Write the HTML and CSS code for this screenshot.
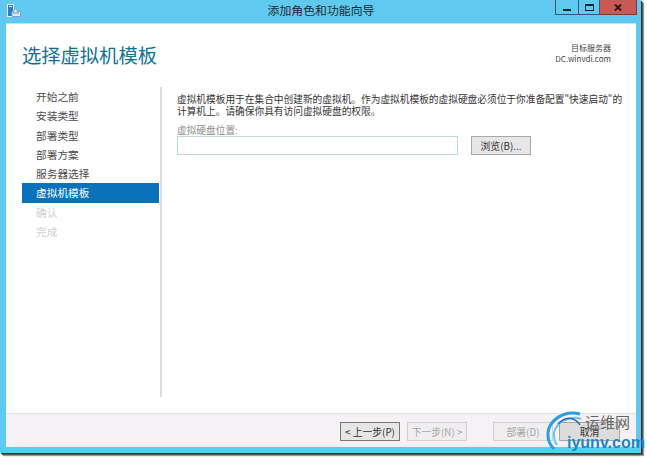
FILE: index.html
```html
<!DOCTYPE html>
<html lang="zh">
<head>
<meta charset="utf-8">
<title>添加角色和功能向导</title>
<link rel="stylesheet" href="styles.css">
</head>
<body>
<div class="window">
  <div class="titlebar">
    <svg class="app-icon" width="14" height="13" viewBox="0 0 14 13">
      <rect x="0.5" y="0.5" width="6" height="12" fill="#2a7fc4" stroke="#e8f4fb"/>
      <rect x="2" y="2" width="3" height="1" fill="#e8f4fb"/>
      <path d="M5 12.5V7.5h2V5h3v2.500h3.500v5z" fill="#dfeef7" stroke="#7aa6c4"/>
      <rect x="6" y="8.500" width="6" height="1" fill="#6f93ad"/>
    </svg>
    <div class="title">添加角色和功能向导</div>
    <div class="controls">
      <div class="ctl ctl-min"><span class="min-glyph"></span></div>
      <div class="ctl ctl-max"><span class="max-glyph"></span></div>
      <div class="ctl ctl-close">
        <svg width="8" height="7" viewBox="0 0 8 7"><path d="M1 0.500L7 6.500M7 0.500L1 6.500" stroke="#2a1414" stroke-width="1.800"/></svg>
      </div>
    </div>
  </div>
  <div class="client">
    <header class="head">
      <h1 class="heading">选择虚拟机模板</h1>
      <div class="target">
        <div>目标服务器</div>
        <div>DC.winvdi.com</div>
      </div>
    </header>
    <div class="main">
      <nav class="nav">
        <div class="nav-item">开始之前</div>
        <div class="nav-item">安装类型</div>
        <div class="nav-item">部署类型</div>
        <div class="nav-item">部署方案</div>
        <div class="nav-item">服务器选择</div>
        <div class="nav-item is-active">虚拟机模板</div>
        <div class="nav-item is-off">确认</div>
        <div class="nav-item is-off">完成</div>
      </nav>
      <section class="pane">
        <p class="intro">虚拟机模板用于在集合中创建新的虚拟机。作为虚拟机模板的虚拟硬盘必须位于你准备配置"快速启动"的计算机上。请确保你具有访问虚拟硬盘的权限。</p>
        <label class="field-label">虚拟硬盘位置:</label>
        <div class="field-row">
          <div class="input"></div>
          <div class="btn btn-browse">浏览(B)...</div>
        </div>
      </section>
    </div>
    <footer class="foot">
      <div class="btn btn-prev">&lt; 上一步(P)</div>
      <div class="btn is-off btn-next">下一步(N) &gt;</div>
      <div class="btn is-off btn-deploy">部署(D)</div>
      <div class="btn btn-cancel">取消</div>
    </footer>
  </div>
</div>
<div class="watermark">
  <svg class="wm-swirl" width="40" height="40" viewBox="0 0 40 40" fill="none">
    <path d="M36 3C20 -1 5 9 4 22C3.500 29 6 34 10 38" stroke="#2a9fdc" stroke-width="3"/>
    <path d="M37 8C26 4 12 11 10 22C9.500 27 11 31 13 34" stroke="#6cc3ec" stroke-width="2"/>
    <path d="M14 13C22 4 32 7 36 14" stroke="#1d6fb5" stroke-width="1.500"/>
  </svg>
  <div class="wm-cn">运维网</div>
  <div class="wm-en">iyunv.com</div>
</div>
</body>
</html>
```
FILE: styles.css
```css
html, body {
  margin: 0;
  padding: 0;
  background: #ffffff;
}
body {
  width: 647px;
  height: 459px;
  overflow: hidden;
  position: relative;
  font-family: "Noto Sans CJK SC", "Liberation Sans", sans-serif;
}
.window {
  box-sizing: border-box;
  width: 641px;
  height: 453px;
  padding: 0 5px 6px 6px;
  background: #5fc9f0;
  display: flex;
  flex-direction: column;
  box-shadow: 1px 1px 0 #333, 2px 2px 0 #555, 3px 3px 1px #999;
}
.titlebar {
  height: 23px;
  flex: none;
  display: flex;
  align-items: flex-start;
  position: relative;
}
.app-icon {
  margin: 4px 0 0 1px;
}
.title {
  position: absolute;
  left: 0;
  right: 0;
  top: 2px;
  text-align: center;
  font-size: 11.900px;
  line-height: 16px;
  color: #1c2b33;
}
.controls {
  margin-left: auto;
  margin-right: -1px;
  display: flex;
  height: 15px;
}
.ctl {
  box-sizing: border-box;
  height: 15px;
  border: 1px solid #2f5a72;
  border-top: 0;
  display: flex;
  align-items: center;
  justify-content: center;
}
.ctl-min { width: 24px; }
.ctl-max { width: 21px; border-left: 0; }
.ctl-close { width: 37px; border-left: 0; background: #c75a52; border-color: #7a3a36; }
.min-glyph {
  width: 8px;
  height: 2px;
  margin-top: 5px;
  background: #10222c;
}
.max-glyph {
  box-sizing: border-box;
  width: 9px;
  height: 7px;
  border: 1px solid #10222c;
  border-top-width: 2px;
}
.client {
  flex: 1;
  min-height: 0;
  background: #ffffff;
  display: flex;
  flex-direction: column;
  border-top: 1px solid #b9e6f7;
}
.head {
  height: 63px;
  flex: none;
  display: flex;
  justify-content: space-between;
  padding: 0 25px 0 16px;
  color: #333;
}
.heading {
  margin: 18px 0 0;
  font-size: 19.300px;
  line-height: 26px;
  font-weight: 400;
  color: #0f7196;
}
.target {
  margin-top: 18px;
  text-align: right;
  font-size: 8px;
  line-height: 11px;
  color: #444;
}
.main {
  flex: 1;
  min-height: 0;
  display: flex;
  align-items: flex-start;
}
.nav {
  box-sizing: border-box;
  width: 156px;
  height: 310px;
  padding: 0 1px 0 16px;
  border-right: 2px solid #dcdcdc;
  flex: none;
}
.nav-item {
  height: 19.300px;
  line-height: 19px;
  padding-left: 14px;
  font-size: 10.700px;
  color: #4a4a4a;
}
.nav-item.is-active {
  background: #0a72bb;
  color: #fff;
}
.nav-item.is-off {
  color: #cfcfcf;
}
.pane {
  flex: 1;
  padding: 6px 0 0 15px;
}
.intro {
  margin: 0;
  width: 446px;
  font-size: 9.700px;
  line-height: 12px;
  color: #333;
}
.field-label {
  display: block;
  margin-top: 7px;
  font-size: 9.700px;
  line-height: 12px;
  color: #8c8c8c;
}
.field-row {
  display: flex;
  align-items: flex-start;
  gap: 13px;
}
.input {
  box-sizing: border-box;
  width: 281px;
  height: 19px;
  background: #fff;
  border: 1px solid #c0d7e8;
}
.btn {
  box-sizing: border-box;
  width: 60px;
  height: 19px;
  display: flex;
  align-items: center;
  justify-content: center;
  font-size: 9.800px;
  color: #333;
  background: #e6e6e6;
  border: 1px solid #a8a8a8;
}
.foot {
  box-sizing: border-box;
  height: 34px;
  flex: none;
  background: #f5f1f5;
  border-top: 1px solid #e3e3e3;
  padding: 8px 0 0 334px;
  display: flex;
  align-items: flex-start;
}
.btn.is-off {
  color: #a5a5a5;
  background: #f0eef0;
  border-color: #d0d0d0;
}
.btn-prev { border-color: #777; }
.btn-next { margin-left: 7px; }
.btn-deploy { margin-left: 26px; }
.btn-cancel { margin-left: 6px; width: 61px; background: #dcdcdc; }
.watermark {
  position: absolute;
  left: 544px;
  top: 411px;
  width: 103px;
  height: 45px;
}
.wm-swirl {
  position: absolute;
  left: 0;
  top: 0;
}
.wm-cn {
  position: absolute;
  left: 41px;
  top: 1px;
  font-size: 15px;
  line-height: 20px;
  color: #666;
}
.wm-en {
  position: absolute;
  left: 23px;
  top: 23px;
  font-family: "Liberation Sans", sans-serif;
  font-size: 16px;
  font-weight: 700;
  line-height: 18px;
  color: #1b86c8;
}
```
